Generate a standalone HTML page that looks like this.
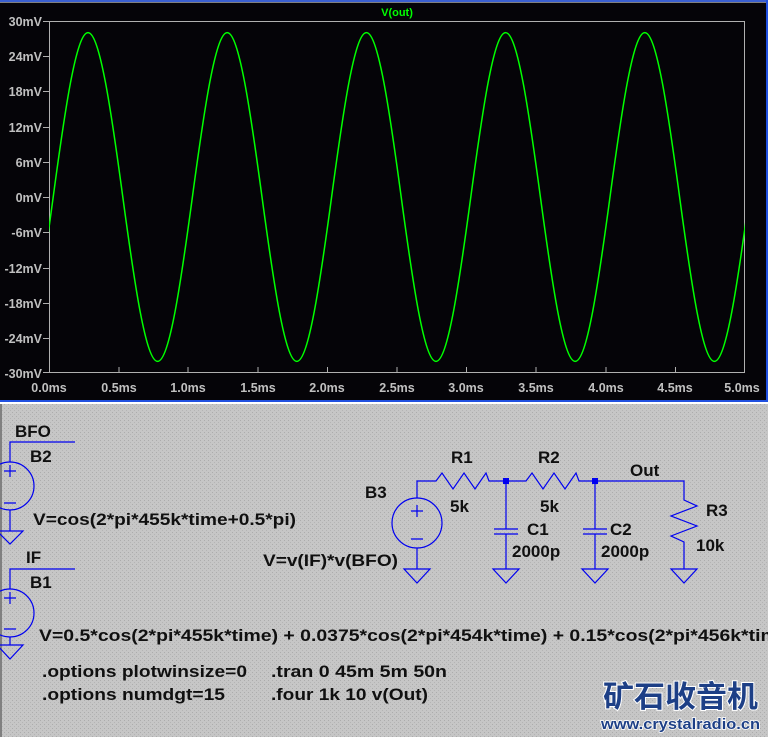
<!DOCTYPE html>
<html><head><meta charset="utf-8"><style>
html,body{margin:0;padding:0;width:768px;height:737px;overflow:hidden;background:#c0c0c0}
svg{display:block}
.ax{font-family:"Liberation Sans",sans-serif;font-size:12.5px;fill:#c0c0c0;font-weight:bold}
.t{font-family:"Liberation Sans",sans-serif;font-size:17px;font-weight:bold;fill:#101010}
</style></head><body>
<svg width="768" height="737" viewBox="0 0 768 737" xmlns="http://www.w3.org/2000/svg">
<defs>
<pattern id="dots" width="4" height="4" patternUnits="userSpaceOnUse">
<rect width="4" height="4" fill="#c6c6c6"/><rect x="0" y="0" width="1" height="1" fill="#acacac"/><rect x="2" y="2" width="1" height="1" fill="#b4b4b4"/>
</pattern>
<clipPath id="pc"><rect x="49" y="21" width="696" height="352"/></clipPath>
</defs>
<rect x="0" y="0" width="768" height="402" fill="#050408"/>
<rect x="0" y="0" width="768" height="2" fill="#3a5fd0"/>
<rect x="0" y="2" width="768" height="1" fill="#808080"/>
<rect x="766" y="0" width="2" height="405" fill="#2050e0"/>
<rect x="0" y="400" width="768" height="2" fill="#2050e0"/>
<rect x="0" y="402" width="768" height="2" fill="#ffffff"/>
<rect x="0" y="404" width="768" height="333" fill="url(#dots)"/>
<rect x="0" y="404" width="2" height="333" fill="#808080"/>
<text x="397" y="16" text-anchor="middle" font-family="Liberation Sans,sans-serif" font-size="11" font-weight="bold" fill="#00ff00">V(out)</text>
<rect x="49.5" y="21.5" width="695" height="351" fill="none" stroke="#b0b0b0" stroke-width="1"/>
<g stroke="#b0b0b0" stroke-width="1">
<line x1="43" y1="21.5" x2="49" y2="21.5"/><line x1="43" y1="56.5" x2="49" y2="56.5"/><line x1="43" y1="91.5" x2="49" y2="91.5"/><line x1="43" y1="127.5" x2="49" y2="127.5"/><line x1="43" y1="162.5" x2="49" y2="162.5"/><line x1="43" y1="197.5" x2="49" y2="197.5"/><line x1="43" y1="232.5" x2="49" y2="232.5"/><line x1="43" y1="268.5" x2="49" y2="268.5"/><line x1="43" y1="303.5" x2="49" y2="303.5"/><line x1="43" y1="338.5" x2="49" y2="338.5"/><line x1="43" y1="372.5" x2="49" y2="372.5"/>
<line x1="119" y1="367" x2="119" y2="373"/><line x1="188" y1="367" x2="188" y2="373"/><line x1="258" y1="367" x2="258" y2="373"/><line x1="327.5" y1="367" x2="327.5" y2="373"/><line x1="397" y1="367" x2="397" y2="373"/><line x1="466.5" y1="367" x2="466.5" y2="373"/><line x1="536" y1="367" x2="536" y2="373"/><line x1="606" y1="367" x2="606" y2="373"/><line x1="675.5" y1="367" x2="675.5" y2="373"/>
</g>
<g class="ax" text-anchor="end">
<text x="42" y="26">30mV</text><text x="42" y="61">24mV</text><text x="42" y="96">18mV</text><text x="42" y="132">12mV</text><text x="42" y="167">6mV</text><text x="42" y="202">0mV</text><text x="42" y="237">-6mV</text><text x="42" y="273">-12mV</text><text x="42" y="308">-18mV</text><text x="42" y="343">-24mV</text><text x="42" y="378">-30mV</text>
</g>
<g class="ax" text-anchor="middle">
<text x="49" y="392">0.0ms</text><text x="119" y="392">0.5ms</text><text x="188" y="392">1.0ms</text><text x="258" y="392">1.5ms</text><text x="327" y="392">2.0ms</text><text x="397" y="392">2.5ms</text><text x="466" y="392">3.0ms</text><text x="536" y="392">3.5ms</text><text x="606" y="392">4.0ms</text><text x="675" y="392">4.5ms</text><text x="742" y="392">5.0ms</text>
</g>
<path clip-path="url(#pc)" fill="none" stroke="#00ff00" stroke-width="1.5" d="M18.4,361.4 C30.2,361.4 41.6,283.1 53.2,197
s23,-164.4 34.8,-164.4 s23.2,78.3 34.8,164.4 s23,164.4 34.8,164.4 s23.2,-78.3 34.8,-164.4
s23,-164.4 34.8,-164.4 s23.2,78.3 34.8,164.4 s23,164.4 34.8,164.4 s23.2,-78.3 34.8,-164.4
s23,-164.4 34.8,-164.4 s23.2,78.3 34.8,164.4 s23,164.4 34.8,164.4 s23.2,-78.3 34.8,-164.4
s23,-164.4 34.8,-164.4 s23.2,78.3 34.8,164.4 s23,164.4 34.8,164.4 s23.2,-78.3 34.8,-164.4
s23,-164.4 34.8,-164.4 s23.2,78.3 34.8,164.4 s23,164.4 34.8,164.4 s23.2,-78.3 34.8,-164.4
s23,-164.4 34.8,-164.4 s23.2,78.3 34.8,164.4 s23,164.4 34.8,164.4 s23.2,-78.3 34.8,-164.4"/>

<g stroke="#0000f0" stroke-width="1.2" fill="none">
<path d="M75,442 H10 V462"/>
<circle cx="10" cy="486" r="24"/>
<path d="M4,471 H16 M10,465 V477 M4,503 H16"/>
<path d="M10,510 V531 M-3,531 H23 L10,544 Z"/>
<path d="M75,569 H10 V589"/>
<circle cx="10" cy="613" r="24"/>
<path d="M4,598 H16 M10,592 V604 M4,629 H16"/>
<path d="M10,637 V645 M-3,645 H23 L10,659 Z"/>
<circle cx="417" cy="523" r="25"/>
<path d="M411,511 H423 M417,505 V517 M411,539 H423"/>
<path d="M417,498 V481 H436 L442,473 L453,489 L464,473 L475,489 L486,473 L489,481 H526 L532,473 L543,489 L554,473 L565,489 L576,473 L579,481 H684 V500 L697,506 L671,516 L697,526 L671,536 L684,542 V569"/>
<path d="M417,548 V569 M404,569 H430 L417,583 Z"/>
<path d="M506,481 V529 M494,529 H518 M494,534 H518 M506,534 V569 M493,569 H519 L506,583 Z"/>
<path d="M595,481 V529 M583,529 H607 M583,534 H607 M595,534 V569 M582,569 H608 L595,583 Z"/>
<path d="M671,569 H697 L684,583 Z"/>
</g>
<rect x="503" y="478" width="6" height="6" fill="#0000f0"/>
<rect x="592" y="478" width="6" height="6" fill="#0000f0"/>

<g class="t">
<text x="15" y="437">BFO</text>
<text x="30" y="462">B2</text>
<text x="33" y="525" textLength="263" lengthAdjust="spacingAndGlyphs">V=cos(2*pi*455k*time+0.5*pi)</text>
<text x="26" y="563">IF</text>
<text x="30" y="588">B1</text>
<text x="39" y="641" textLength="756" lengthAdjust="spacingAndGlyphs">V=0.5*cos(2*pi*455k*time) + 0.0375*cos(2*pi*454k*time) + 0.15*cos(2*pi*456k*time)</text>
<text x="42" y="677" textLength="205" lengthAdjust="spacingAndGlyphs">.options plotwinsize=0</text>
<text x="42" y="700" textLength="183" lengthAdjust="spacingAndGlyphs">.options numdgt=15</text>
<text x="271" y="677" textLength="176" lengthAdjust="spacingAndGlyphs">.tran 0 45m 5m 50n</text>
<text x="271" y="700" textLength="157" lengthAdjust="spacingAndGlyphs">.four 1k 10 v(Out)</text>
<text x="365" y="498">B3</text>
<text x="263" y="566" textLength="135" lengthAdjust="spacingAndGlyphs">V=v(IF)*v(BFO)</text>
<text x="451" y="463">R1</text>
<text x="450" y="512">5k</text>
<text x="538" y="463">R2</text>
<text x="540" y="512">5k</text>
<text x="630" y="476">Out</text>
<text x="527" y="535">C1</text>
<text x="512" y="557">2000p</text>
<text x="610" y="535">C2</text>
<text x="601" y="557">2000p</text>
<text x="706" y="516">R3</text>
<text x="696" y="551">10k</text>
</g>
<text x="603" y="707" textLength="155" lengthAdjust="spacingAndGlyphs" font-family="'Noto Sans CJK SC',sans-serif" font-weight="bold" font-size="30" fill="#1d3f86" stroke="#ffffff" stroke-width="2" paint-order="stroke">矿石收音机</text>
<text x="601" y="729" textLength="159" lengthAdjust="spacingAndGlyphs" font-family="'Liberation Sans',sans-serif" font-weight="bold" font-size="15" fill="#1d3f86" stroke="#ffffff" stroke-width="1.5" paint-order="stroke">www.crystalradio.cn</text>
</svg>
</body></html>
